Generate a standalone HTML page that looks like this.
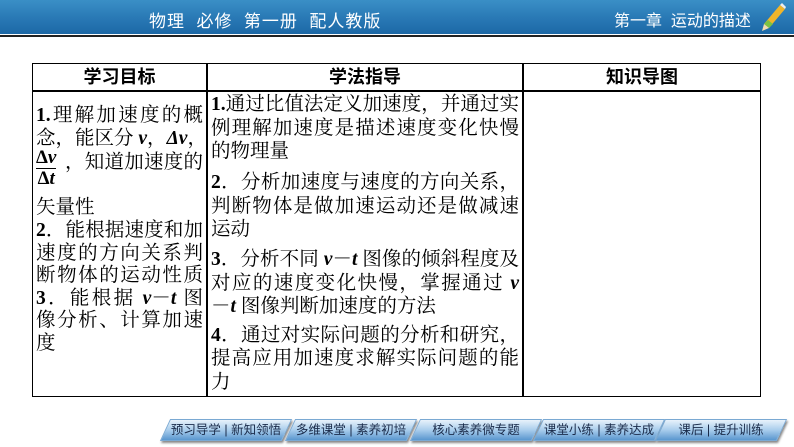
<!DOCTYPE html>
<html><head><meta charset="utf-8"><style>
*{margin:0;padding:0;box-sizing:border-box}
body{width:794px;height:447px;background:#fff;position:relative;overflow:hidden;font-family:"Liberation Serif","Noto Serif CJK SC",serif}
.bar{position:absolute;left:0;top:0;width:794px;height:34px;background:linear-gradient(180deg,#3a8fc6 0%,#2a7ab6 50%,#1c68a6 100%)}
.line{position:absolute;left:0;top:35px;width:794px;height:2px;background:#222}
.ht{position:absolute;color:#fff;font-family:"Liberation Sans","WenQuanYi Zen Hei",sans-serif;font-size:17px;top:7px;white-space:pre}
.tbl{position:absolute;left:32px;top:63px;width:729px;height:334px;border:1.5px solid #000}
.v{position:absolute;top:0;bottom:0;width:1.5px;background:#000}
.h{position:absolute;left:0;right:0;top:26px;height:1.5px;background:#000}
.th{position:absolute;top:0;height:26px;line-height:26px;text-align:center;font-family:"Liberation Sans","Noto Sans CJK SC",sans-serif;font-weight:bold;font-size:18px}
.l{position:absolute;font-size:19.5px;white-space:nowrap;text-align:justify;text-align-last:justify;line-height:22px}
.c1{left:3px;width:167px}
.c2{left:178px;width:308px}
i{font-family:"Liberation Serif",serif;font-weight:bold}
b{font-family:"Liberation Serif",serif}
.frac{position:absolute;left:3px;top:84px;font-family:"Liberation Serif",serif;font-weight:bold;font-size:19px;text-align:center;line-height:20px}
.frac div:first-child{border-bottom:1.5px solid #000}
.btn{position:absolute;top:419px;height:22px;width:122px;background:linear-gradient(180deg,#e8f2fb 0%,#a9cdec 50%,#5a97cf 100%);transform:skewX(-25deg);box-shadow:2px 2px 2px #888;border:1px solid #7aa9d3}
.bt{position:absolute;top:422px;width:122px;text-align:center;font-family:"Liberation Sans","WenQuanYi Zen Hei",sans-serif;font-size:12.5px;color:#1a2b4a;line-height:16px}
</style></head><body>
<div class="bar"></div><div class="line"></div>
<div class="ht" style="left:149px;letter-spacing:1px">物理  必修  第一册  配人教版</div>
<div class="ht" style="left:614px;font-size:16px">第一章  运动的描述</div>
<svg style="position:absolute;left:760px;top:3px" width="28" height="30" viewBox="0 0 28 30">
<polygon points="20,2 25,6 9,25 4,21" fill="#f0b52a"/>
<polygon points="4,21 9,25 13,21 8,17" fill="#7cc242"/>
<polygon points="20,2 25,6 26,4 22,0" fill="#eee"/>
<polygon points="4,21 9,25 2,28" fill="#f3dcb0"/>
</svg>
<div class="tbl">
<div class="v" style="left:173px"></div>
<div class="v" style="left:489px"></div>
<div class="h"></div>
<div class="th" style="left:0;width:173px">学习目标</div>
<div class="th" style="left:175px;width:314px">学法指导</div>
<div class="th" style="left:491px;width:236px">知识导图</div>

<div class="l c1" style="top:41px"><b>1.</b>理解加速度的概</div>
<div class="l c1" style="top:64px">念，能区分 <i>v</i>，<i>Δv</i>，</div>
<div class="frac"><div>Δ<i>v</i></div><div>Δ<i>t</i></div></div>
<div class="l" style="left:32px;width:138px;top:88px;text-align-last:justify">，知道加速度的</div>
<div class="l" style="left:3px;top:133px">矢量性</div>
<div class="l c1" style="top:156px"><b>2</b>．能根据速度和加</div>
<div class="l c1" style="top:179px">速度的方向关系判</div>
<div class="l c1" style="top:201px">断物体的运动性质</div>
<div class="l c1" style="top:224px"><b>3</b>．能根据 <i>v</i>－<i>t</i> 图</div>
<div class="l c1" style="top:246px">像分析、计算加速</div>
<div class="l" style="left:3px;top:269px">度</div>

<div class="l c2" style="top:30px"><b>1.</b>通过比值法定义加速度，并通过实</div>
<div class="l c2" style="top:54px">例理解加速度是描述速度变化快慢</div>
<div class="l" style="left:178px;top:77px">的物理量</div>
<div class="l c2" style="top:108px"><b>2</b>．分析加速度与速度的方向关系，</div>
<div class="l c2" style="top:132px">判断物体是做加速运动还是做减速</div>
<div class="l" style="left:178px;top:155px">运动</div>
<div class="l c2" style="top:185px"><b>3</b>．分析不同 <i>v</i>－<i>t</i> 图像的倾斜程度及</div>
<div class="l c2" style="top:209px">对应的速度变化快慢，掌握通过 <i>v</i></div>
<div class="l" style="left:178px;top:232px">－<i>t</i> 图像判断加速度的方法</div>
<div class="l c2" style="top:261px"><b>4</b>．通过对实际问题的分析和研究，</div>
<div class="l c2" style="top:284px">提高应用加速度求解实际问题的能</div>
<div class="l" style="left:178px;top:308px">力</div>
</div>

<div class="btn" style="left:165px"></div><div class="bt" style="left:165px">预习导学 | 新知领悟</div>
<div class="btn" style="left:290px"></div><div class="bt" style="left:290px">多维课堂 | 素养初培</div>
<div class="btn" style="left:415px"></div><div class="bt" style="left:415px">核心素养微专题</div>
<div class="btn" style="left:538px"></div><div class="bt" style="left:538px">课堂小练 | 素养达成</div>
<div class="btn" style="left:660px"></div><div class="bt" style="left:660px">课后 | 提升训练</div>
</body></html>
